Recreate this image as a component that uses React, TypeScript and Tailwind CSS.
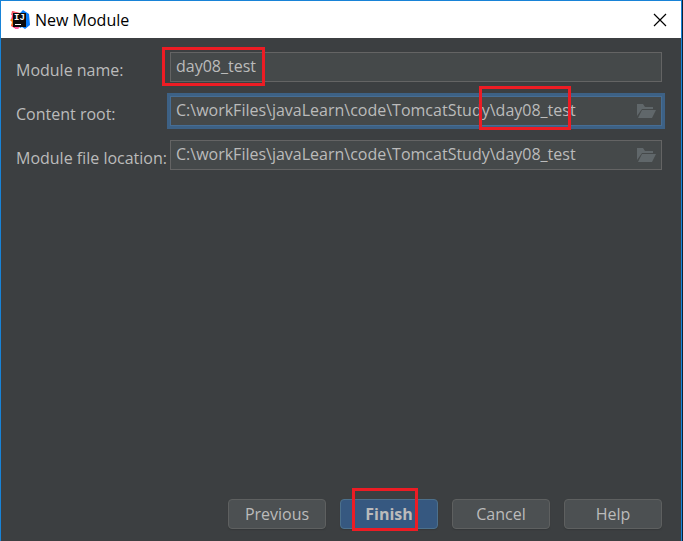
import React from "react";

type FieldProps = {
  id: string;
  label: string;
  value: string;
  focused?: boolean;
  browse?: boolean;
  children?: React.ReactNode;
};

const AppLogo = () => (
  <svg width="20" height="20" viewBox="0 0 20 20" aria-hidden="true">
    <path d="M2 1 L10 3 L9 18 L6 19 L1 16 L3 12 L1 10 L2 6 Z" fill="#fe315d" />
    <path d="M0 10 L4 8 L4 15 L1 16 L2 12 Z" fill="#f97a12" />
    <path d="M2 1 L8 3 L4 6 L1 5 Z" fill="#f7626f" />
    <path d="M10 3 L13 0 L19 4 L20 15 L15 19 L12 17 L10 18 Z" fill="#087cfa" />
    <path d="M5 16 L11 16 L8 19 L5 19 Z" fill="#fe5aa0" />
    <rect x="3" y="3" width="13" height="14" fill="#0b0b0b" />
    <text
      x="4"
      y="10"
      fill="#ffffff"
      fontSize="9"
      fontWeight="700"
      fontFamily="'Liberation Mono', monospace"
    >
      IJ
    </text>
    <rect x="5" y="14" width="6" height="1" fill="#ffffff" />
  </svg>
);

const FolderIcon = () => (
  <svg width="20" height="16" viewBox="0 0 20 16" aria-hidden="true">
    <path d="M1 1 H7 L9 4 H17 V6 H6 L1 13 Z" fill="#60676a" />
    <path d="M6 7 H20 L16 15 H2 Z" fill="#60676a" />
  </svg>
);

// Red frame drawn over the highlighted value
const Mark = ({ className }: { className: string }) => (
  <span className={`pointer-events-none absolute border-3 border-[#ed1c24] ${className}`} />
);

const Field = ({ id, label, value, focused, browse, children }: FieldProps) => (
  <div className="flex items-start">
    <label htmlFor={id} className="w-[154px] shrink-0 whitespace-nowrap pt-[7px] leading-[22px]">
      {label}
    </label>
    <div
      className={`relative flex h-[30px] min-w-0 flex-1 items-center border bg-[#45494a] ${
        focused ? "border-[#466d94] ring-3 ring-[#3d6185]" : "border-[#646464]"
      }`}
    >
      <input
        id={id}
        type="text"
        defaultValue={value}
        spellCheck={false}
        className="h-full min-w-0 flex-1 bg-transparent px-[5px] pb-[2px] outline-none"
      />
      {browse && (
        <button type="button" aria-label={`Browse ${label}`} className="mr-[5px] shrink-0">
          <FolderIcon />
        </button>
      )}
      {children}
    </div>
  </div>
);

const DialogButton = ({
  primary,
  children,
}: {
  primary?: boolean;
  children: React.ReactNode;
}) => (
  <button
    type="button"
    className={`relative h-[30px] w-[98px] rounded border shadow-[0_1px_1px_#35383a] ${
      primary ? "border-[#4c708c] bg-[#365880] font-bold" : "border-[#5e6060] bg-[#4c5052]"
    }`}
  >
    {children}
  </button>
);

const App = () => {
  return (
    <div className="flex min-h-screen w-full bg-[#0a2138] font-['Open_Sans','Noto_Sans',sans-serif] text-base text-[#bbbbbb]">
      <div className="flex min-w-0 flex-1 flex-col border-x border-t border-[#1883d7] bg-[#3c3f41]">
        {/* Title bar */}
        <header className="flex h-[37px] items-center bg-white pr-[14px] pl-[9px] text-black">
          <AppLogo />
          <h1 className="ml-[5px] flex-1">New Module</h1>
          <button type="button" aria-label="Close">
            <svg width="14" height="14" viewBox="0 0 14 14" aria-hidden="true">
              <path d="M1 1 L13 13 M13 1 L1 13" stroke="#000000" strokeWidth="1.2" />
            </svg>
          </button>
        </header>

        <main className="flex flex-1 flex-col gap-[14px] pt-[14px] pr-[19px] pl-[15px]">
          <Field id="module-name" label="Module name:" value="day08_test">
            <Mark className="-top-[6px] -left-[9px] h-[39px] w-[103px]" />
          </Field>
          <Field
            id="content-root"
            label="Content root:"
            value="C:\workFiles\javaLearn\code\TomcatStudy\day08_test"
            focused
            browse
          >
            <Mark className="-top-[11px] left-[308px] h-[44px] w-[92px]" />
          </Field>
          <Field
            id="module-location"
            label="Module file location:"
            value="C:\workFiles\javaLearn\code\TomcatStudy\day08_test"
            browse
          />
        </main>

        {/* Wizard actions */}
        <footer className="flex justify-end gap-[14px] pr-[19px] pb-3">
          <DialogButton>Previous</DialogButton>
          <DialogButton primary>
            Finish
            <Mark className="-top-[12px] left-[11px] h-[43px] w-[66px]" />
          </DialogButton>
          <DialogButton>Cancel</DialogButton>
          <DialogButton>Help</DialogButton>
        </footer>
      </div>
      <div className="w-px shrink-0" />
    </div>
  );
};

export default App;
